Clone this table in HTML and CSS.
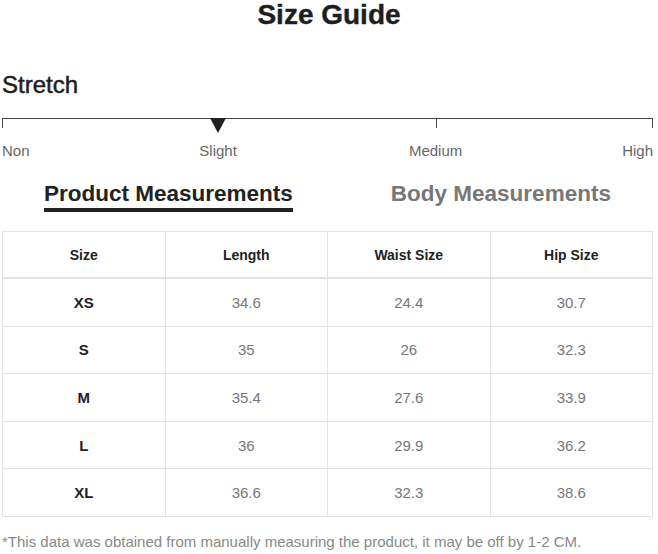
FILE: index.html
```html
<!DOCTYPE html>
<html>
<head>
<meta charset="utf-8">
<link rel="stylesheet" href="styles.css">
</head>
<body>
<div class="page">
  <h1 class="title">Size Guide</h1>
  <h2 class="stretch-title">Stretch</h2>
  <div class="scale">
    <div class="scale-line">
      <span class="tick tick-start"></span>
      <span class="pointer"></span>
      <span class="tick tick-mid"></span>
      <span class="tick tick-end"></span>
    </div>
    <div class="scale-labels">
      <span class="lbl lbl-non">Non</span>
      <span class="lbl lbl-slight">Slight</span>
      <span class="lbl lbl-medium">Medium</span>
      <span class="lbl lbl-high">High</span>
    </div>
  </div>
  <div class="tabs">
    <span class="tab tab-active">Product Measurements</span>
    <span class="tab tab-inactive">Body Measurements</span>
  </div>
  <table class="size-table">
    <thead>
      <tr><th>Size</th><th>Length</th><th>Waist Size</th><th>Hip Size</th></tr>
    </thead>
    <tbody>
      <tr><td class="sz">XS</td><td>34.6</td><td>24.4</td><td>30.7</td></tr>
      <tr><td class="sz">S</td><td>35</td><td>26</td><td>32.3</td></tr>
      <tr><td class="sz">M</td><td>35.4</td><td>27.6</td><td>33.9</td></tr>
      <tr><td class="sz">L</td><td>36</td><td>29.9</td><td>36.2</td></tr>
      <tr><td class="sz">XL</td><td>36.6</td><td>32.3</td><td>38.6</td></tr>
    </tbody>
  </table>
  <p class="note">*This data was obtained from manually measuring the product, it may be off by 1-2 CM.</p>
</div>
</body>
</html>
```

FILE: styles.css
```css
html, body {
  margin: 0;
  padding: 0;
  background: #fff;
}
body {
  font-family: "Liberation Sans", Arial, sans-serif;
  color: #222;
}
.page {
  width: 658px;
}
.title {
  margin: 0 0 -2px 0;
  font-size: 28px;
  line-height: 30px;
  font-weight: bold;
  text-align: center;
  color: #1e1e1e;
  -webkit-text-stroke: 0.4px #1e1e1e;
}
.stretch-title {
  margin: 44px 0 0 2px;
  font-size: 24px;
  line-height: 26px;
  font-weight: normal;
  color: #1e1e1e;
  -webkit-text-stroke: 0.5px #1e1e1e;
}
.scale {
  margin: 20px 5px 0 2px;
}
.scale-line {
  position: relative;
  height: 1px;
  background: #444;
}
.tick {
  position: absolute;
  top: 0;
  width: 1px;
  height: 10px;
  background: #444;
}
.tick-start { left: 0; }
.tick-mid { left: 66.6%; }
.tick-end { right: 0; }
.pointer {
  position: absolute;
  top: 0;
  left: 33.2%;
  margin-left: -8px;
  width: 0;
  height: 0;
  border-left: 8px solid transparent;
  border-right: 8px solid transparent;
  border-top: 15px solid #222;
}
.scale-labels {
  position: relative;
  height: 17px;
  margin-top: 23px;
  font-size: 15px;
  line-height: 17px;
  color: #666;
}
.lbl {
  position: absolute;
  top: 0;
  white-space: nowrap;
}
.lbl-non { left: 0; }
.lbl-slight { left: 33.2%; transform: translateX(-50%); }
.lbl-medium { left: 66.6%; transform: translateX(-50%); }
.lbl-high { right: 0; }
.tabs {
  display: flex;
  margin-top: 22px;
  font-size: 22.5px;
  line-height: 26px;
  font-weight: bold;
}
.tab {
  display: block;
}
.tab-active {
  margin-left: 44px;
  color: #222;
  padding-bottom: 1px;
  border-bottom: 4px solid #222;
}
.tab-inactive {
  margin-left: 98px;
  color: #777;
}
.size-table {
  margin: 19px 0 0 2px;
  width: 651px;
  border-collapse: collapse;
  table-layout: fixed;
  font-size: 15px;
}
.size-table th,
.size-table td {
  border: 1px solid #e2e2e2;
  text-align: center;
  height: 46.6px;
  padding: 0;
}
.size-table th {
  height: 45px;
  font-weight: bold;
  font-size: 14px;
  color: #222;
  border-bottom: 2px solid #e2e2e2;
}
.size-table td {
  color: #777;
}
.size-table td.sz {
  color: #222;
  font-weight: bold;
}
.note {
  margin: 16px 0 0 2px;
  font-size: 15px;
  line-height: 17px;
  color: #888;
  white-space: nowrap;
}
```
